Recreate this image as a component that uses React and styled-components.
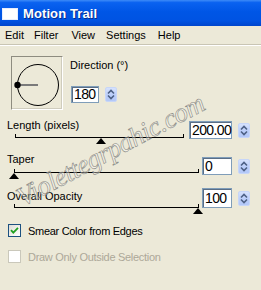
import React from "react";
import styled, { createGlobalStyle } from "styled-components";

const Global = createGlobalStyle`
  html, body { margin: 0; padding: 0; background: #ECE9D8; }
  body { font-family: "Liberation Sans", Arial, sans-serif; }
`;

const Window = styled.div`
  position: relative;
  width: 261px;
  height: 290px;
  overflow: hidden;
  background: #ECE9D8;
  font-size: 11px;
  color: #000;
`;

const TitleBar = styled.div`
  height: 26px;
  display: flex;
  align-items: center;
  gap: 5px;
  padding-left: 2px;
  background: linear-gradient(180deg, #3D8BF8 0%, #0A62F0 10%, #0056E6 45%, #0053E2 80%, #0046CC 100%);
`;

const TitleIcon = styled.div`
  width: 14px;
  height: 10px;
  background: #fff;
  border: 1px solid #E8EEFC;
  margin-top: 1px;
`;

const TitleText = styled.div`
  color: #fff;
  font-weight: bold;
  font-size: 13px;
  letter-spacing: 0.1px;
  text-shadow: 1px 1px 0 #0A2E8C;
`;

const MenuBar = styled.div`
  height: 18px;
  display: flex;
  align-items: center;
  padding-left: 5px;
  border-bottom: 1px solid #C9C5B4;
  box-shadow: 0 1px 0 #FFFFFF;
`;

const MenuItem = styled.span`
  margin-right: ${(p) => p.$gap}px;
  font-size: 11px;
`;

const Content = styled.div`
  display: flex;
  flex-direction: column;
  padding: 11px 11px 0 0;
`;

const DirectionRow = styled.div`
  display: flex;
  gap: 8px;
  padding-left: 11px;
`;

const DialBox = styled.div`
  width: 50px;
  height: 52px;
  border-top: 1px solid #8E8C80;
  border-left: 1px solid #8E8C80;
  border-right: 1px solid #FFFFFF;
  border-bottom: 1px solid #FFFFFF;
  box-shadow: inset -1px -1px 0 #CFCCBD;
  display: flex;
`;

const DirCol = styled.div`
  display: flex;
  flex-direction: column;
`;

const Label = styled.div`
  font-size: 11px;
  line-height: 13px;
  height: 13px;
  white-space: nowrap;
  color: ${(p) => (p.$disabled ? "#ACA899" : "#000")};
`;

const DirLabel = styled(Label)`
  margin-top: 3px;
  margin-left: -1px;
`;

const SpinField = styled.div`
  display: flex;
  align-items: center;
  gap: ${(p) => p.$gap ?? 6}px;
  margin-top: ${(p) => p.$top}px;
`;

const NumBox = styled.div`
  box-sizing: border-box;
  width: ${(p) => p.$w}px;
  height: ${(p) => p.$h}px;
  background: #fff;
  border: 1px solid #7F9DB9;
  box-shadow: inset 1px 1px 0 #5A6E86;
  font-size: 14px;
  letter-spacing: -0.6px;
  line-height: ${(p) => p.$h - 2}px;
  padding-left: 2px;
`;

const SpinBtn = styled.div`
  box-sizing: border-box;
  width: 12px;
  height: 15px;
  border-radius: 2px;
  background: linear-gradient(180deg, #D6E2FD 0%, #BCCFFA 50%, #B3C8F8 100%);
  border: 1px solid #C7D6F8;
  display: flex;
  align-items: center;
  justify-content: center;
`;

const SliderGroup = styled.div`
  display: flex;
  justify-content: space-between;
  align-items: flex-start;
  padding-left: 7px;
  margin-top: ${(p) => p.$top}px;
`;

const LabelTrack = styled.div`
  display: flex;
  flex-direction: column;
`;

const Track = styled.div`
  position: relative;
  width: ${(p) => p.$w}px;
  height: 1px;
  background: #000;
  margin-top: ${(p) => p.$gap}px;
  margin-left: ${(p) => p.$left}px;
  margin-bottom: 7px;
  &::before, &::after {
    content: "";
    position: absolute;
    top: -3px;
    width: 1px;
    height: 4px;
    background: #000;
  }
  &::before { left: 0; }
  &::after { right: 0; }
`;

const Thumb = styled.div`
  position: absolute;
  top: 1px;
  width: 0;
  height: 0;
  border-left: 5px solid transparent;
  border-right: 5px solid transparent;
  border-bottom: 6px solid #000;
  margin-left: -5px;
`;

const CheckRow = styled.div`
  display: flex;
  align-items: center;
  gap: 7px;
  padding-left: 8px;
  margin-top: ${(p) => p.$top}px;
`;

const CheckBox = styled.div`
  box-sizing: border-box;
  width: 13px;
  height: 13px;
  border: 1px solid ${(p) => (p.$disabled ? "#CAC8BB" : "#1C5180")};
  background: ${(p) =>
    p.$disabled ? "#FFFFFF" : "linear-gradient(135deg, #DCDBD5 0%, #F4F3EE 60%, #FFFFFF 100%)"};
  display: flex;
  align-items: center;
  justify-content: center;
`;

const CheckLabel = styled.span`
  font-size: 11px;
  letter-spacing: -0.3px;
  color: ${(p) => (p.$disabled ? "#ACA899" : "#000")};
`;

const Watermark = styled.div`
  position: absolute;
  left: 26px;
  top: 182px;
  transform: rotate(-28deg);
  transform-origin: left bottom;
  font-family: "Liberation Serif", serif;
  font-style: italic;
  font-size: 27px;
  letter-spacing: -0.5px;
  color: rgba(255, 255, 255, 0.35);
  -webkit-text-stroke: 0.6px #8A8A86;
  white-space: nowrap;
  pointer-events: none;
`;

const Spinner = () => (
  <SpinBtn>
    <svg width="8" height="11" viewBox="0 0 8 11">
      <path d="M1 4.5 L4 1.5 L7 4.5" fill="none" stroke="#4D6185" strokeWidth="1.6" />
      <path d="M1 6.5 L4 9.5 L7 6.5" fill="none" stroke="#4D6185" strokeWidth="1.6" />
    </svg>
  </SpinBtn>
);

const Dial = () => (
  <svg width="50" height="52" viewBox="0 0 50 52">
    <circle cx="26" cy="28" r="20.5" fill="none" stroke="#000" strokeWidth="1" />
    <line x1="6" y1="28" x2="26" y2="28" stroke="#7A7A7A" strokeWidth="2" />
    <circle cx="5.5" cy="28" r="3.2" fill="#000" />
  </svg>
);

const Slider = ({ label, width, left, gap, value, top, boxW, boxH, boxTop, text }) => (
  <SliderGroup $top={top}>
    <LabelTrack>
      <Label>{label}</Label>
      <Track $w={width} $left={left} $gap={gap}>
        <Thumb style={{ left: `${(value / 100) * (width - 1)}px` }} />
      </Track>
    </LabelTrack>
    <SpinField $top={boxTop}>
      <NumBox $w={boxW} $h={boxH}>{text}</NumBox>
      <Spinner />
    </SpinField>
  </SliderGroup>
);

export default function App() {
  return (
    <Window>
      <Global />
      <TitleBar>
        <TitleIcon />
        <TitleText>Motion Trail</TitleText>
      </TitleBar>
      <MenuBar>
        <MenuItem $gap={10}>Edit</MenuItem>
        <MenuItem $gap={13}>Filter</MenuItem>
        <MenuItem $gap={11}>View</MenuItem>
        <MenuItem $gap={12}>Settings</MenuItem>
        <MenuItem $gap={0}>Help</MenuItem>
      </MenuBar>
      <Content>
        <DirectionRow>
          <DialBox>
            <Dial />
          </DialBox>
          <DirCol>
            <DirLabel>Direction (°)</DirLabel>
            <SpinField $top={14}>
              <NumBox $w={28} $h={17}>180</NumBox>
              <Spinner />
            </SpinField>
          </DirCol>
        </DirectionRow>
        <Slider label="Length (pixels)" width={169} left={8} gap={5} value={51} top={9}
          boxW={43} boxH={18} boxTop={2} text="200.00" />
        <Slider label="Taper" width={185} left={7} gap={6} value={0} top={8}
          boxW={30} boxH={18} boxTop={4} text="0" />
        <Slider label="Overall Opacity" width={185} left={7} gap={4} value={100} top={10}
          boxW={30} boxH={20} boxTop={-2} text="100" />
        <CheckRow $top={9}>
          <CheckBox>
            <svg width="9" height="9" viewBox="0 0 9 9">
              <path d="M1 4.2 L3.3 6.6 L8 1.8" fill="none" stroke="#21A121" strokeWidth="1.8" />
            </svg>
          </CheckBox>
          <CheckLabel>Smear Color from Edges</CheckLabel>
        </CheckRow>
        <CheckRow $top={13}>
          <CheckBox $disabled />
          <CheckLabel $disabled>Draw Only Outside Selection</CheckLabel>
        </CheckRow>
      </Content>
      <Watermark>Violettegrpahic.com</Watermark>
    </Window>
  );
}
